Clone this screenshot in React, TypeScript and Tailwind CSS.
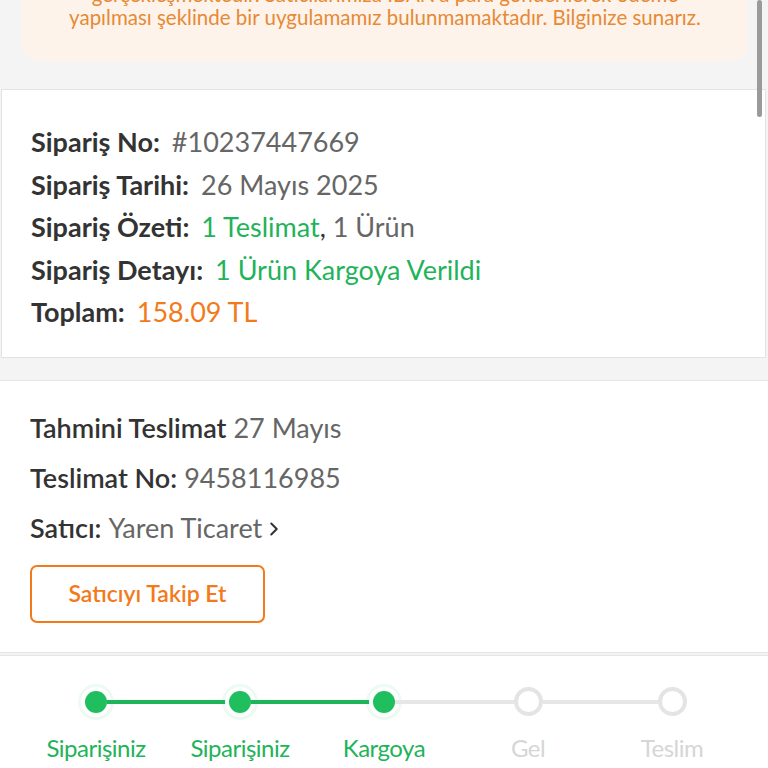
import { ChevronRight } from 'lucide-react'

const steps = [
  { label: 'Siparişiniz', done: true },
  { label: 'Siparişiniz', done: true },
  { label: 'Kargoya', done: true },
  { label: 'Gel', done: false },
  { label: 'Teslim', done: false },
]

function Row({ label, children }: { label: string; children: React.ReactNode }) {
  return (
    <div className="flex items-center h-[42.5px] whitespace-nowrap">
      <span className="font-bold text-[#333333] mr-3">{label}</span>
      <span className="text-[#666666]">{children}</span>
    </div>
  )
}

export default function App() {
  return (
    <div className="relative h-[768px] w-[768px] overflow-hidden bg-[#f4f4f4] font-['Lato','Noto_Sans',sans-serif]">
      {/* info banner */}
      <div className="px-[22px] pr-[20px]">
        <div className="mt-[-44px] rounded-b-2xl bg-[#fef3ea] px-2 pt-[27px] pb-[32px] text-center text-[20.5px] leading-[23px] text-[#e58a36] whitespace-nowrap">
          <p>gerçekleşmektedir. Satıcılarımıza IBAN'a para gönderilerek ödeme</p>
          <p>yapılması şeklinde bir uygulamamız bulunmamaktadır. Bilginize sunarız.</p>
        </div>
      </div>

      {/* order summary */}
      <div className="mt-[28px] ml-[1px] mr-[2px] border border-[#e3e3e3] bg-white pl-[29px] pt-[31px] pb-[23px] text-[27px]">
        <Row label="Sipariş No:">#10237447669</Row>
        <Row label="Sipariş Tarihi:">26 Mayıs 2025</Row>
        <Row label="Sipariş Özeti:">
          <span className="text-[#1fb35a]">1 Teslimat</span>
          <span className="text-[#333333]">,</span> 1 Ürün
        </Row>
        <Row label="Sipariş Detayı:">
          <span className="text-[#1fb35a]">1 Ürün Kargoya Verildi</span>
        </Row>
        <Row label="Toplam:">
          <span className="text-[#f27a1a]">158.09 TL</span>
        </Row>
      </div>

      {/* delivery */}
      <div className="mt-[22px] border-y border-[#e6e6e6] bg-white pl-[30px] pt-[23px] pb-[29px] text-[27px]">
        <div className="flex h-[50px] items-center whitespace-nowrap">
          <span className="font-semibold text-[#333333]">Tahmini Teslimat</span>
          <span className="ml-[7px] text-[#666666]">27 Mayıs</span>
        </div>
        <div className="flex h-[50px] items-center whitespace-nowrap">
          <span className="font-semibold text-[#333333]">Teslimat No:</span>
          <span className="ml-[7px] text-[#666666]">9458116985</span>
        </div>
        <div className="flex h-[50px] items-center whitespace-nowrap">
          <span className="font-semibold text-[#333333]">Satıcı:</span>
          <span className="ml-[7px] text-[#666666]">Yaren Ticaret</span>
          <ChevronRight className="ml-[1px] h-[22px] w-[22px] text-[#333333]" strokeWidth={2.2} />
        </div>
        <button className="mt-[11px] flex h-[58px] w-[235px] items-center justify-center rounded-[7px] border-2 border-[#f27a1a] text-[23px] font-semibold text-[#f27a1a]">
          Satıcıyı Takip Et
        </button>
      </div>

      {/* stepper */}
      <div className="mt-[2px] border-t border-[#e6e6e6] bg-white px-[24px] pt-[31px] pb-10">
        <div className="grid grid-cols-5">
          {steps.map((s, i) => {
            const leftColor =
              i === 0 ? 'bg-transparent' : steps[i].done ? 'bg-[#1fb35a]' : 'bg-[#e6e6e6]'
            const rightColor =
              i === steps.length - 1
                ? 'bg-transparent'
                : steps[i + 1].done
                  ? 'bg-[#1fb35a]'
                  : 'bg-[#e6e6e6]'
            return (
              <div key={i} className="flex flex-col items-center">
                <div className="flex h-[30px] w-full items-center">
                  <div className={`h-[4px] flex-1 ${leftColor}`} />
                  {s.done ? (
                    <div className="h-[22px] w-[22px] rounded-full bg-[#1fbf5f] shadow-[0_0_0_4px_#ffffff,0_0_0_7px_rgba(31,191,95,0.08)]" />
                  ) : (
                    <div className="h-[29px] w-[29px] rounded-full border-[4px] border-[#e4e4e4] bg-white" />
                  )}
                  <div className={`h-[4px] flex-1 ${rightColor}`} />
                </div>
                <span
                  className={`mt-[19px] text-[24px] leading-none tracking-[-0.5px] ${
                    s.done ? 'text-[#1fb35a]' : 'text-[#d6d6d6]'
                  }`}
                >
                  {s.label}
                </span>
              </div>
            )
          })}
        </div>
      </div>

      {/* scrollbar overlay */}
      <div className="absolute right-[6px] top-0 h-[117px] w-[5px] rounded-full bg-[#9a9a9a]" />
    </div>
  )
}
